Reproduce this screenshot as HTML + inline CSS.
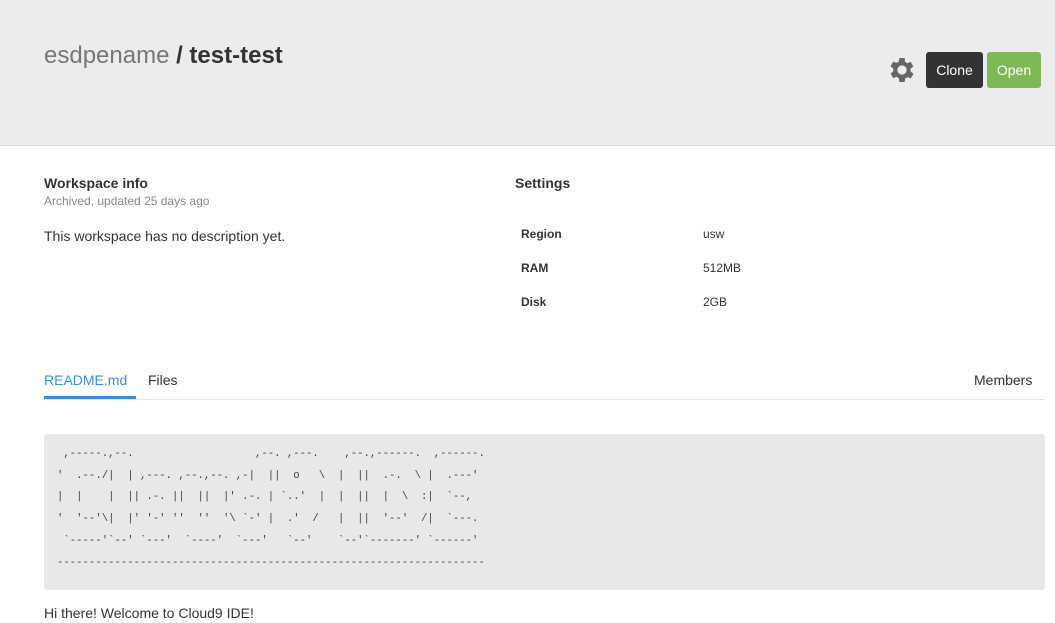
<!DOCTYPE html>
<html><head><meta charset="utf-8"><style>
body{margin:0;width:1055px;height:623px;overflow:hidden;background:#fff;font-family:"Liberation Sans",sans-serif;color:#333}
.hdr{position:absolute;left:0;top:0;width:1055px;height:145px;background:#ececec;border-bottom:1px solid #d8d8d8}
.title{position:absolute;left:44px;top:42px;font-size:24px;color:#777}
.title b{color:#333}
.btn{position:absolute;top:52px;height:36px;line-height:36px;color:#fff;font-size:14px;text-align:center;border-radius:3px}
.abs{position:absolute}
pre{margin:0;font-family:"Liberation Mono",monospace;font-size:10.65px;line-height:21.7px;color:#444}
</style></head><body>
<div class="hdr">
<div class="title">esdpename <b>/ test-test</b></div>
<svg class="abs" style="left:886px;top:54px" width="32" height="32" viewBox="0 0 24 24"><path fill="#666" d="M19.4 13a7.5 7.5 0 0 0 0-2l2.1-1.6-2-3.5-2.5 1a7 7 0 0 0-1.7-1L15 3h-4l-.4 2.7a7 7 0 0 0-1.7 1l-2.5-1-2 3.5L6.5 11a7.5 7.5 0 0 0 0 2l-2.1 1.6 2 3.5 2.5-1a7 7 0 0 0 1.7 1L11 21h4l.4-2.7a7 7 0 0 0 1.7-1l2.5 1 2-3.5zM13 15.5A3.5 3.5 0 1 1 13 8.5a3.5 3.5 0 0 1 0 7z" transform="translate(-1 0)"/></svg>
<div class="btn" style="left:926px;width:57px;background:#333">Clone</div>
<div class="btn" style="left:987px;width:54px;background:#7dba56">Open</div>
</div>
<div class="abs" style="left:44px;top:175px;font-size:14px;font-weight:bold">Workspace info</div>
<div class="abs" style="left:44px;top:194px;font-size:12px;color:#888">Archived, updated 25 days ago</div>
<div class="abs" style="left:44px;top:228px;font-size:14px">This workspace has no description yet.</div>
<div class="abs" style="left:515px;top:175px;font-size:14px;font-weight:bold">Settings</div>
<div class="abs" style="left:521px;top:227px;font-size:12px;font-weight:bold">Region</div>
<div class="abs" style="left:703px;top:227px;font-size:12px">usw</div>
<div class="abs" style="left:521px;top:261px;font-size:12px;font-weight:bold">RAM</div>
<div class="abs" style="left:703px;top:261px;font-size:12px">512MB</div>
<div class="abs" style="left:521px;top:295px;font-size:12px;font-weight:bold">Disk</div>
<div class="abs" style="left:703px;top:295px;font-size:12px">2GB</div>
<div class="abs" style="left:44px;top:399px;width:1001px;height:1px;background:#e5e5e5"></div>
<div class="abs" style="left:44px;top:372px;font-size:14px;color:#3a8fd8">README.md</div>
<div class="abs" style="left:44px;top:396px;width:92px;height:3px;background:#3a8fd8"></div>
<div class="abs" style="left:148px;top:372px;font-size:14px">Files</div>
<div class="abs" style="left:974px;top:372px;font-size:14px">Members</div>
<div class="abs" style="left:44px;top:434px;width:1001px;height:156px;background:#e8e8e8;border-radius:3px">
<pre style="position:absolute;left:13px;top:10px"> ,-----.,--.                   ,--. ,---.    ,--.,------.  ,------.
'  .--./|  | ,---. ,--.,--. ,-|  ||  o   \  |  ||  .-.  \ |  .---'
|  |    |  || .-. ||  ||  |' .-. | `..'  |  |  ||  |  \  :|  `--,
'  '--'\|  |' '-' ''  ''  '\ `-' |  .'  /   |  ||  '--'  /|  `---.
 `-----'`--' `---'  `----'  `---'   `--'    `--'`-------' `------'
-------------------------------------------------------------------</pre>
</div>
<div class="abs" style="left:44px;top:605px;font-size:14px">Hi there! Welcome to Cloud9 IDE!</div>
</body></html>
